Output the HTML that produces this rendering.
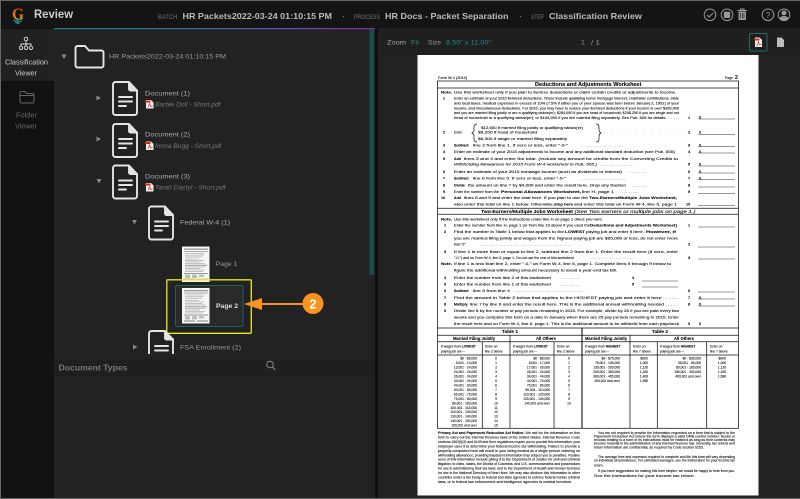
<!DOCTYPE html>
<html><head><meta charset="utf-8"><title>Review</title>
<style>
html,body{margin:0;padding:0;background:#222;width:800px;height:499px;overflow:hidden}
svg{display:block;font-family:"Liberation Sans",sans-serif}
.ui{filter:blur(.3px)}
.doc{filter:blur(.35px)}
.doc text{font-size:3.8px;fill:#000;stroke:#000;stroke-width:.07}
.doc .b{font-weight:bold;fill:#000}
.doc .h{font-size:5px;font-weight:bold;fill:#000}
.doc .s{font-size:3.3px}
.doc .e{text-anchor:end;font-size:3.3px}
.doc .m{text-anchor:middle;font-size:3.3px}
.doc .c{text-anchor:middle;font-size:4.2px;font-weight:bold;fill:#000}
.doc .t{font-size:3.3px}
</style></head><body>
<svg width="800" height="499" viewBox="0 0 800 499" xmlns="http://www.w3.org/2000/svg">
<defs>
<linearGradient id="gl" x1="0" x2="1" y1="0" y2="0"><stop offset="0" stop-color="#178089"/><stop offset=".5" stop-color="#3a6aa8"/><stop offset="1" stop-color="#8f2ca8"/></linearGradient>
<linearGradient id="lg" x1="0" x2="0" y1="0" y2="1"><stop offset="0" stop-color="#d9381c"/><stop offset=".75" stop-color="#e88a1e"/></linearGradient>
<pattern id="dots" width="2" height="2" patternUnits="userSpaceOnUse"><rect width="2" height="2" fill="#1e1e1e"/><rect width="1" height="1" fill="#232323"/></pattern>
<g id="docicon" fill="none" stroke="#e4e4e4" stroke-width="1.9" stroke-linejoin="round" stroke-linecap="round">
<path d="M3.5 1H17L25 9.500V31.500a2.500 2.500 0 0 1-2.500 2.500H3.500A2.500 2.500 0 0 1 1 31.500V3.500A2.500 2.500 0 0 1 3.500 1Z"/>
<path d="M17 1.500V8a1.500 1.500 0 0 0 1.500 1.500H25" fill="#e4e4e4"/>
<path d="M7 16H20M7 20.500H20M7 25H14"/>
</g>
<g id="pdf"><path d="M1 0H6L8.500 2.500V8.500H1Z" fill="#eee"/><rect x="0" y="0.500" width="5.500" height="2" fill="#d5281b"/><path d="M3 7L4.800 3.500L5.500 6.500L7.500 6" fill="none" stroke="#d5281b" stroke-width=".7"/></g>
<g id="thumb">
<rect width="27.500" height="35.500" fill="#f6f6f6"/>
<g fill="#bdbdbd">
<rect x="2" y="2" width="24" height="1.300" fill="#999"/><rect x="2" y="4.500" width="24" height="1" fill="#aaa"/><rect x="3" y="6.500" width="19" height=".9"/><rect x="3" y="8.200" width="19" height=".9"/><rect x="3" y="9.900" width="17" height=".9"/><rect x="3" y="12" width="14" height=".9"/><rect x="3" y="13.500" width="19" height=".9"/><rect x="3" y="15" width="17" height=".9"/><rect x="3" y="16.500" width="20" height=".9"/><rect x="3" y="18.300" width="22" height="1" fill="#999"/><rect x="3" y="20" width="20" height=".9"/><rect x="3" y="21.500" width="15" height=".9"/><rect x="3" y="23" width="20" height=".9"/><rect x="3" y="24.500" width="18" height=".9"/>
<rect x="2" y="26.500" width="24" height="1" fill="#999"/><rect x="3" y="28" width="5" height="3.500"/><rect x="10" y="28" width="5" height="3.500"/><rect x="17" y="28" width="5" height="2.500"/><rect x="2" y="32" width="11" height="2"/><rect x="15" y="32" width="11" height="2"/>
</g></g>
</defs>

<rect width="800" height="499" fill="#222"/>
<g class="ui">
<!-- header -->
<rect width="800" height="28" fill="#141414"/>
<rect x="0" y="0" width="800" height="1" fill="#666"/>
<rect x="0" y="0" width="1" height="499" fill="#666"/>
<rect x="0" y="498" width="800" height="1" fill="#666"/>
<!-- sidebar -->
<rect x="1" y="28" width="53" height="470" fill="#111"/>
<rect x="1" y="29" width="53" height="52" fill="#212121"/>
<!-- tree panel -->
<rect x="54" y="29" width="321" height="469" fill="#222"/>
<rect x="54" y="28" width="321" height="1.200" fill="url(#gl)"/>
<rect x="369.500" y="29" width="4.500" height="246" fill="#1b4c4d"/>
<rect x="375" y="28" width="3" height="470" fill="#0f0f0f"/>
<!-- right panel -->
<rect x="378" y="28" width="422" height="470" fill="#222"/>
<rect x="378" y="29" width="422" height="26" fill="url(#dots)"/>
<!-- doc types -->
<rect x="54" y="358" width="321" height="19" fill="url(#dots)"/>
<rect x="279" y="362" width="91" height="11" fill="#1d1d1d"/>
<circle cx="270" cy="364.500" r="3.300" fill="none" stroke="#888" stroke-width="1"/><path d="M272.500 367L275.500 370" stroke="#888" stroke-width="1.100"/>
<text x="58.500" y="370.500" font-size="8" font-weight="bold" fill="#777" textLength="69" lengthAdjust="spacingAndGlyphs">Document Types</text>

<!-- logo -->
<text x="12" y="19.500" font-family="Liberation Serif" font-size="17" font-weight="bold" fill="url(#lg)" textLength="12" lengthAdjust="spacingAndGlyphs">G</text>
<path d="M13.500 20q2.300 1.300 4.500 0t4.500 0M14.500 21.800q1.800 1 3.500 0t3.500 0" fill="none" stroke="#1f9a9a" stroke-width="1.100"/>
<path d="M15.500 22.500h5l-2.500 1.700z" fill="#1f9a9a"/>
<text x="34" y="18" font-size="11.500" font-weight="bold" fill="#ccc" textLength="39" lengthAdjust="spacingAndGlyphs">Review</text>
<text x="158" y="19" font-size="6.500" fill="#777" textLength="19" lengthAdjust="spacingAndGlyphs">BATCH</text>
<text x="182.500" y="19" font-size="8.500" font-weight="bold" fill="#bbb" textLength="149.500" lengthAdjust="spacingAndGlyphs">HR Packets2022-03-24 01:10:15 PM</text>
<circle cx="343.500" cy="16.500" r=".7" fill="#777"/>
<text x="354" y="19" font-size="6.500" fill="#777" textLength="26" lengthAdjust="spacingAndGlyphs">PROCESS</text>
<text x="385" y="19" font-size="8.500" font-weight="bold" fill="#bbb" textLength="123.500" lengthAdjust="spacingAndGlyphs">HR Docs - Packet Separation</text>
<circle cx="520.500" cy="16.500" r=".7" fill="#777"/>
<text x="531" y="19" font-size="6.500" fill="#777" textLength="13" lengthAdjust="spacingAndGlyphs">STEP</text>
<text x="549" y="19" font-size="8.500" font-weight="bold" fill="#bbb" textLength="93" lengthAdjust="spacingAndGlyphs">Classification Review</text>
<!-- header icons -->
<g fill="none" stroke="#999" stroke-width="1">
<circle cx="710" cy="14.800" r="5.800"/><path d="M707 14.800l2.200 2.200 4-4.200"/>
<circle cx="727" cy="14.800" r="5.800"/><rect x="724.300" y="12.100" width="5.400" height="5.400" fill="#999" rx="1"/>
<path d="M737.500 10.500h9.500M740.500 10.500V9h3.500v1.500" stroke-width="1.100"/><path d="M738.500 11.500h7.500v8.500h-7.500z" fill="#999" stroke="none"/><path d="M740.500 13v5.500M742.300 13v5.500M744 13v5.500" stroke="#141414" stroke-width=".6"/>
<circle cx="768" cy="14.800" r="5.800"/>
<circle cx="784" cy="14.800" r="5.800"/>
</g>
<text x="768" y="17.800" font-size="8" fill="#999" text-anchor="middle">?</text>
<circle cx="784" cy="13" r="2.500" fill="#999"/><path d="M779.500 18.500a4.800 3.800 0 0 1 9 0a5.800 5.800 0 0 1-9 0z" fill="#999"/>

<!-- sidebar icons -->
<g fill="none" stroke="#ddd" stroke-width=".9">
<circle cx="26" cy="39" r="1.800"/><path d="M26 41v3M21 46.500v-2.500h10v2.500M26 44v2.500"/>
<circle cx="21" cy="47.800" r="1.700"/><circle cx="26" cy="47.800" r="1.700"/><circle cx="31" cy="47.800" r="1.700"/>
</g>
<text x="5" y="64.500" font-size="7" fill="#ccc" textLength="43" lengthAdjust="spacingAndGlyphs">Classification</text>
<text x="15" y="75.500" font-size="7" fill="#ccc" textLength="22" lengthAdjust="spacingAndGlyphs">Viewer</text>
<path d="M20 93a1.500 1.500 0 0 1 1.500-1.500h3.500l1.500 2h6a1.500 1.500 0 0 1 1.500 1.500v6.500a1.500 1.500 0 0 1-1.500 1.500H21.500a1.500 1.500 0 0 1-1.500-1.500zM20 95.500h14" fill="none" stroke="#666" stroke-width="1"/>
<text x="16" y="117.500" font-size="7" fill="#666" textLength="21" lengthAdjust="spacingAndGlyphs">Folder</text>
<text x="15" y="128.500" font-size="7" fill="#666" textLength="22" lengthAdjust="spacingAndGlyphs">Viewer</text>

<!-- tree -->
<path d="M61.500 54.500h5l-2.500 4.500z" fill="#888"/>
<path d="M77.500 46h7.500l4 4.500h12.500a2 2 0 0 1 2 2V65.500a2 2 0 0 1-2 2H77.500a2 2 0 0 1-2-2V48a2 2 0 0 1 2-2Z" fill="none" stroke="#e4e4e4" stroke-width="1.900" stroke-linejoin="round"/>
<text x="109" y="58.500" font-size="6.800" fill="#999" textLength="117" lengthAdjust="spacingAndGlyphs">HR Packets2022-03-24 01:10:15 PM</text>

<path d="M96.500 95.500l4.500 2.500-4.500 2.500z" fill="#888"/>
<use href="#docicon" x="112" y="81"/>
<text x="145" y="95.500" font-size="6.800" fill="#aaa" textLength="45" lengthAdjust="spacingAndGlyphs">Document (1)</text>
<use href="#pdf" x="145" y="100"/>
<text x="155" y="106.500" font-size="6.300" font-style="italic" fill="#777" textLength="65.500" lengthAdjust="spacingAndGlyphs">Barbie Doll - Short.pdf</text>

<path d="M96.500 136.500l4.500 2.500-4.500 2.500z" fill="#888"/>
<use href="#docicon" x="112" y="123"/>
<text x="145" y="136.500" font-size="6.800" fill="#aaa" textLength="45" lengthAdjust="spacingAndGlyphs">Document (2)</text>
<use href="#pdf" x="145" y="141.500"/>
<text x="155" y="148" font-size="6.300" font-style="italic" fill="#777" textLength="66.500" lengthAdjust="spacingAndGlyphs">Imma Bugg - Short.pdf</text>

<path d="M96.500 179h5l-2.500 4.500z" fill="#888"/>
<use href="#docicon" x="112" y="164.500"/>
<text x="145" y="178.500" font-size="6.800" fill="#aaa" textLength="45" lengthAdjust="spacingAndGlyphs">Document (3)</text>
<use href="#pdf" x="145" y="183"/>
<text x="155" y="189.500" font-size="6.300" font-style="italic" fill="#777" textLength="70.500" lengthAdjust="spacingAndGlyphs">Tarah Dactyl - Short.pdf</text>

<path d="M132 220h5l-2.500 4.500z" fill="#888"/>
<use href="#docicon" x="148" y="205.500"/>
<text x="180" y="224.500" font-size="6.800" fill="#aaa" textLength="50" lengthAdjust="spacingAndGlyphs">Federal W-4 (1)</text>

<use href="#thumb" x="182" y="246.500"/>
<text x="215.700" y="266" font-size="6.800" fill="#999" textLength="21.500" lengthAdjust="spacingAndGlyphs">Page 1</text>

<rect x="175.500" y="285.500" width="67.500" height="41" rx="2" fill="#2a2a2a" stroke="#1a6468" stroke-width="1"/>
<use href="#thumb" x="182" y="288"/>
<text x="216" y="308" font-size="6.800" font-weight="bold" fill="#ddd" textLength="22" lengthAdjust="spacingAndGlyphs">Page 2</text>
<rect x="166.800" y="279.800" width="84.500" height="53.500" rx="1" fill="none" stroke="#e8e80c" stroke-width="1.300"/>

<!-- FSA -->
<path d="M133 344.500l4.500 2.500-4.500 2.500z" fill="#888"/>
<svg x="148" y="330" width="26" height="24" overflow="hidden"><use href="#docicon" x="0" y="0"/></svg>
<text x="180" y="349.500" font-size="6.800" fill="#999" textLength="61" lengthAdjust="spacingAndGlyphs">FSA Enrollment (2)</text>

<!-- callout -->
<path d="M258 304H304" stroke="#f7931e" stroke-width="2"/>
<path d="M244 304L262 298V310Z" fill="#f7931e"/>
<circle cx="313" cy="303.500" r="10.500" fill="#f7931e"/>
<text x="313" y="308.500" font-size="13" font-weight="bold" fill="#fff" text-anchor="middle">2</text>

<!-- toolbar -->
<text x="387" y="44.500" font-size="6.800" fill="#aaa" textLength="19" lengthAdjust="spacingAndGlyphs">Zoom</text>
<text x="411" y="44.500" font-size="6.800" fill="#1b8f97" textLength="8" lengthAdjust="spacingAndGlyphs">Fit</text>
<text x="428" y="44.500" font-size="6.800" fill="#999" textLength="13" lengthAdjust="spacingAndGlyphs">Size</text>
<text x="446" y="44.500" font-size="6.800" fill="#1b8f97" textLength="45" lengthAdjust="spacingAndGlyphs">8.50" x 11.00"</text>
<text x="581" y="44.500" font-size="6.800" fill="#999">1</text>
<text x="591" y="44.500" font-size="6.800" fill="#999" textLength="9" lengthAdjust="spacingAndGlyphs">/ 1</text>
<rect x="749.500" y="33.500" width="17.500" height="17.500" rx="1.500" fill="none" stroke="#1a6c72" stroke-width="1"/>
<path d="M755 37.500h4.500l2.500 2.500v7h-7z" fill="#eee"/><rect x="754" y="38.500" width="5.500" height="2" fill="#d5281b"/><path d="M757 46l1.500-4 1 3 2-.5" fill="none" stroke="#d5281b" stroke-width=".7"/>
<path d="M777 37.500h4.500l2.500 2.500v7h-7z" fill="#bbb"/>
</g>

<!-- document page -->
<rect x="417.500" y="55" width="341" height="440.500" fill="#fff"/>
<g class="doc">
<text class="s" x="438" y="79" textLength="29" lengthAdjust="spacingAndGlyphs">Form W-4 (2015)</text>
<text class="s" x="725" y="79" textLength="8" lengthAdjust="spacingAndGlyphs">Page</text><text class="b" x="735" y="79" style="font-size:5px">2</text>
<g fill="none" stroke="#111" stroke-width=".75">
<rect x="437.500" y="81" width="301" height="347.300"/>
<path d="M437.500 88H738.500M437.500 208.300H738.500M437.500 214.300H738.500M437.500 328H738.500M437.500 335.300H738.500M437.500 341.700H738.500M437.500 355H738.500"/>
<path d="M510 335.300V428.300M482.300 341.700V428.300M554 341.700V428.300M630 335.300V428.300M657.300 341.700V428.300M706.700 341.700V428.300"/>
<path d="M582 328V428.300" stroke-width="1.100"/>
</g>
<g stroke="#333" stroke-width=".55">
<path d="M698 119H735M698 134.500H735M698 146.500H735M698 153H735M698 166H735M698 173H735M698 179.500H735M698 187H735M698 193.500H735M698 205.500H735"/>
<path d="M698 227H735M698 247H735M698 259H735M642 281H678M642 287H678M698 292H735M698 299H735M698 306H735"/>
</g>
<text class="h" x="535" y="86" textLength="106.500" lengthAdjust="spacingAndGlyphs">Deductions and Adjustments Worksheet</text>
<text class="b" x="441" y="93.500" textLength="11" lengthAdjust="spacingAndGlyphs">Note.</text>
<text x="454" y="93.500" textLength="222.500" lengthAdjust="spacingAndGlyphs">Use this worksheet only if you plan to itemize deductions or claim certain credits or adjustments to income.</text>
<text class="b" x="443" y="99.500">1</text>
<text class="t" x="454" y="99.500" textLength="225" lengthAdjust="spacingAndGlyphs">Enter an estimate of your 2015 itemized deductions. These include qualifying home mortgage interest, charitable contributions, state</text>
<text class="t" x="454" y="104.500" textLength="225" lengthAdjust="spacingAndGlyphs">and local taxes, medical expenses in excess of 10% (7.5% if either you or your spouse was born before January 2, 1951) of your</text>
<text class="t" x="454" y="109.300" textLength="225" lengthAdjust="spacingAndGlyphs">income, and miscellaneous deductions. For 2015, you may have to reduce your itemized deductions if your income is over $309,900</text>
<text class="t" x="454" y="114.200" textLength="225" lengthAdjust="spacingAndGlyphs">and you are married filing jointly or are a qualifying widow(er); $284,050 if you are head of household; $258,250 if you are single and not</text>
<text class="t" x="454" y="118.900" textLength="225" lengthAdjust="spacingAndGlyphs">head of household or a qualifying widow(er); or $154,950 if you are married filing separately. See Pub. 505 for details . . . . . .</text>
<text class="b" x="688" y="118.900">1</text><text x="699" y="118.500">$</text>
<text class="b" x="443" y="133.500">2</text><text class="t" x="454" y="133.500">Enter:</text>
<path d="M477 124q-3 0-3 3v3q0 2-2 3 2 1 2 3v3q0 3 3 3M596 124q3 0 3 3v3q0 2 2 3-2 1-2 3v3q0 3-3 3" fill="none" stroke="#111" stroke-width=".7"/>
<text class="t" x="481" y="129" textLength="102" lengthAdjust="spacingAndGlyphs">$12,600 if married filing jointly or qualifying widow(er)</text>
<text class="t" x="478" y="133.500" textLength="59" lengthAdjust="spacingAndGlyphs">$9,250 if head of household</text>
<text class="t" x="478" y="140" textLength="89" lengthAdjust="spacingAndGlyphs">$6,300 if single or married filing separately</text>
<text class="s" x="604" y="133.500" letter-spacing="3">. . . . . . . . . . . .</text>
<text class="b" x="688" y="133.500">2</text><text x="699" y="133.500">$</text>
<text class="b" x="443" y="146.300">3</text><text class="b" x="454" y="146.300" style="font-size:3.600px">Subtract</text><text class="t" x="473" y="146.300" textLength="95" lengthAdjust="spacingAndGlyphs">line 2 from line 1. If zero or less, enter "-0-"</text>
<text class="s" x="580" y="146.300">. . . . . . . . . . . . . . . . . . . . . . . . .</text>
<text class="b" x="688" y="146.300">3</text><text x="699" y="146.300">$</text>
<text class="b" x="443" y="153">4</text><text class="t" x="454" y="153" textLength="221" lengthAdjust="spacingAndGlyphs">Enter an estimate of your 2015 adjustments to income and any additional standard deduction (see Pub. 505)</text>
<text class="b" x="688" y="153">4</text><text x="699" y="153">$</text>
<text class="b" x="443" y="160">5</text><text class="b" x="454" y="160" style="font-size:3.600px">Add</text>
<text x="464" y="160" textLength="214" lengthAdjust="spacingAndGlyphs">lines 3 and 4 and enter the total. (Include any amount for credits from the Converting Credits to</text>
<text x="454" y="165.600" font-style="italic" textLength="143" lengthAdjust="spacingAndGlyphs">Withholding Allowances for 2015 Form W-4 worksheet in Pub. 505.)</text>
<text class="s" x="600" y="165.600">. . . . . . . . . . . . . . . . . . .</text>
<text class="b" x="688" y="165.600">5</text><text x="699" y="165.600">$</text>
<text class="b" x="443" y="173">6</text><text class="t" x="454" y="173" textLength="168" lengthAdjust="spacingAndGlyphs">Enter an estimate of your 2015 nonwage income (such as dividends or interest)</text>
<text class="s" x="628" y="173">. . . . . . . . . .</text>
<text class="b" x="688" y="173">6</text><text x="699" y="173">$</text>
<text class="b" x="443" y="179.300">7</text><text class="b" x="454" y="179.300" style="font-size:3.600px">Subtract</text><text class="t" x="473" y="179.300" textLength="93" lengthAdjust="spacingAndGlyphs">line 6 from line 5. If zero or less, enter "-0-"</text>
<text class="s" x="580" y="179.300">. . . . . . . . . . . . . . . . . . . . . . . . .</text>
<text class="b" x="688" y="179.300">7</text><text x="699" y="179.300">$</text>
<text class="b" x="443" y="186.600">8</text><text class="b" x="454" y="186.600" style="font-size:3.600px">Divide</text><text class="t" x="468" y="186.600" textLength="158" lengthAdjust="spacingAndGlyphs">the amount on line 7 by $4,000 and enter the result here. Drop any fraction</text>
<text class="s" x="632" y="186.600">. . . . . . . . .</text><text class="b" x="688" y="186.600">8</text>
<text class="b" x="443" y="193">9</text><text class="t" x="454" y="193" textLength="45" lengthAdjust="spacingAndGlyphs">Enter the number from the</text><text class="b" x="501" y="193" textLength="80" lengthAdjust="spacingAndGlyphs">Personal Allowances Worksheet,</text><text class="t" x="582" y="193" textLength="32" lengthAdjust="spacingAndGlyphs">line H, page 1</text>
<text class="s" x="620" y="193">. . . . . . . . . . .</text><text class="b" x="688" y="193">9</text>
<text class="b" x="441" y="199">10</text><text class="b" x="454" y="199" style="font-size:3.600px">Add</text><text class="t" x="464" y="199" textLength="124" lengthAdjust="spacingAndGlyphs">lines 8 and 9 and enter the total here. If you plan to use the</text><text class="b" x="589" y="199" textLength="88" lengthAdjust="spacingAndGlyphs">Two-Earners/Multiple Jobs Worksheet,</text>
<text class="t" x="454" y="205.500" textLength="100" lengthAdjust="spacingAndGlyphs">also enter this total on line 1 below. Otherwise,</text><text class="b" x="554" y="205.500" textLength="19" lengthAdjust="spacingAndGlyphs">stop here</text><text class="t" x="574" y="205.500" textLength="103" lengthAdjust="spacingAndGlyphs">and enter this total on Form W-4, line 5, page 1</text>
<text class="b" x="686" y="205.500">10</text>

<text class="h" x="481" y="213" textLength="92" lengthAdjust="spacingAndGlyphs" style="font-size:4.600px">Two-Earners/Multiple Jobs Worksheet</text>
<text x="574.500" y="213" font-style="italic" style="font-size:4.500px" textLength="121" lengthAdjust="spacingAndGlyphs">(See Two earners or multiple jobs on page 1.)</text>
<text class="b" x="441" y="220.300" textLength="11" lengthAdjust="spacingAndGlyphs">Note.</text><text class="t" x="454" y="220.300" textLength="149" lengthAdjust="spacingAndGlyphs">Use this worksheet only if the instructions under line H on page 1 direct you here.</text>
<text class="b" x="444" y="226.600">1</text><text class="t" x="454" y="226.600" textLength="136" lengthAdjust="spacingAndGlyphs">Enter the number from line H, page 1 (or from line 10 above if you used the</text><text class="b" x="590" y="226.600" textLength="87" lengthAdjust="spacingAndGlyphs">Deductions and Adjustments Worksheet)</text><text class="b" x="688" y="226.600">1</text>
<text class="b" x="444" y="233">2</text><text class="t" x="454" y="233" textLength="110" lengthAdjust="spacingAndGlyphs">Find the number in Table 1 below that applies to the</text><text class="b" x="565" y="233" textLength="20" lengthAdjust="spacingAndGlyphs">LOWEST</text><text class="t" x="586" y="233" textLength="58" lengthAdjust="spacingAndGlyphs">paying job and enter it here.</text><text class="b" x="646" y="233" textLength="30" lengthAdjust="spacingAndGlyphs">However, if</text>
<text class="t" x="454" y="239.600" textLength="224" lengthAdjust="spacingAndGlyphs">you are married filing jointly and wages from the highest paying job are $65,000 or less, do not enter more</text>
<text class="t" x="454" y="245.600">than "3"</text><text class="s" x="480" y="245.600">. . . . . . . . . . . . . . . . . . . . . . . . . . . . . . . . . . . . . . . . . . . . . . . . . .</text><text class="b" x="688" y="245.600">2</text>
<text class="b" x="444" y="253">3</text><text class="t" x="454" y="253" textLength="224" lengthAdjust="spacingAndGlyphs">If line 1 is more than or equal to line 2, subtract line 2 from line 1. Enter the result here (if zero, enter</text>
<text class="t" x="454" y="259" textLength="120" lengthAdjust="spacingAndGlyphs">"-0-") and on Form W-4, line 5, page 1. Do not use the rest of this worksheet</text><text class="s" x="590" y="259">. . . . . . . . . . . . . . . . . . . . . . .</text><text class="b" x="688" y="259">3</text>
<text class="b" x="441" y="265" textLength="11" lengthAdjust="spacingAndGlyphs">Note.</text><text class="t" x="454" y="265" textLength="217" lengthAdjust="spacingAndGlyphs">If line 1 is less than line 2, enter "-0-" on Form W-4, line 5, page 1. Complete lines 4 through 9 below to</text>
<text class="t" x="454" y="271.300" textLength="163" lengthAdjust="spacingAndGlyphs">figure the additional withholding amount necessary to avoid a year-end tax bill.</text>
<text class="b" x="444" y="279">4</text><text class="t" x="454" y="279" textLength="97" lengthAdjust="spacingAndGlyphs">Enter the number from line 2 of this worksheet</text><text class="s" x="560" y="279">. . . . . . . . . . .</text><text class="b" x="632" y="279">4</text>
<text class="b" x="444" y="285.600">5</text><text class="t" x="454" y="285.600" textLength="97" lengthAdjust="spacingAndGlyphs">Enter the number from line 1 of this worksheet</text><text class="s" x="560" y="285.600">. . . . . . . . . . .</text><text class="b" x="632" y="285.600">5</text>
<text class="b" x="444" y="292">6</text><text class="b" x="454" y="292" style="font-size:3.600px">Subtract</text><text class="t" x="473" y="292" textLength="37" lengthAdjust="spacingAndGlyphs">line 5 from line 4</text><text class="s" x="514" y="292">. . . . . . . . . . . . . . . . . . . . . . . . . . . . . . . . . . . . . . .</text><text class="b" x="688" y="292">6</text>
<text class="b" x="444" y="299">7</text><text class="t" x="454" y="299" textLength="225" lengthAdjust="spacingAndGlyphs">Find the amount in Table 2 below that applies to the HIGHEST paying job and enter it here . . . . . .</text><text class="b" x="688" y="299">7</text><text x="699" y="299">$</text>
<text class="b" x="444" y="305.600">8</text><text class="b" x="454" y="305.600" style="font-size:3.600px">Multiply</text><text class="t" x="470" y="305.600" textLength="205" lengthAdjust="spacingAndGlyphs">line 7 by line 6 and enter the result here. This is the additional annual withholding needed . . . .</text><text class="b" x="688" y="305.600">8</text><text x="699" y="305.600">$</text>
<text class="b" x="444" y="312">9</text><text class="t" x="454" y="312" textLength="225" lengthAdjust="spacingAndGlyphs">Divide line 8 by the number of pay periods remaining in 2015. For example, divide by 25 if you are paid every two</text>
<text class="t" x="454" y="318.600" textLength="225" lengthAdjust="spacingAndGlyphs">weeks and you complete this form on a date in January when there are 25 pay periods remaining in 2015. Enter</text>
<text class="t" x="454" y="325" textLength="225" lengthAdjust="spacingAndGlyphs">the result here and on Form W-4, line 6, page 1. This is the additional amount to be withheld from each paycheck</text><text class="b" x="688" y="325">9</text><text x="699" y="325">$</text>

<text class="c" x="510" y="333" style="font-size:4.800px">Table 1</text>
<text class="c" x="660" y="333" style="font-size:4.800px">Table 2</text>
<text class="c" x="474" y="340">Married Filing Jointly</text><text class="c" x="546" y="340">All Others</text><text class="c" x="606" y="340">Married Filing Jointly</text><text class="c" x="684" y="340">All Others</text>
<text class="s" x="441" y="347.500">If wages from <tspan font-weight="bold">LOWEST</tspan></text><text class="s" x="441" y="352.500">paying job are—</text>
<text class="s" x="485" y="347.500">Enter on</text><text class="s" x="485" y="352.500">line 2 above</text>
<text class="s" x="513" y="347.500">If wages from <tspan font-weight="bold">LOWEST</tspan></text><text class="s" x="513" y="352.500">paying job are—</text>
<text class="s" x="557" y="347.500">Enter on</text><text class="s" x="557" y="352.500">line 2 above</text>
<text class="s" x="585" y="347.500">If wages from <tspan font-weight="bold">HIGHEST</tspan></text><text class="s" x="585" y="352.500">paying job are—</text>
<text class="s" x="633" y="347.500">Enter on</text><text class="s" x="633" y="352.500">line 7 above</text>
<text class="s" x="660" y="347.500">If wages from <tspan font-weight="bold">HIGHEST</tspan></text><text class="s" x="660" y="352.500">paying job are—</text>
<text class="s" x="710" y="347.500">Enter on</text><text class="s" x="710" y="352.500">line 7 above</text>

<text class="e" x="477" y="359.600">$0 - $8,000</text><text class="m" x="496" y="359.600">0</text>
<text class="e" x="477" y="364.100">8,001 - 13,000</text><text class="m" x="496" y="364.100">1</text>
<text class="e" x="477" y="368.500">13,001 - 24,000</text><text class="m" x="496" y="368.500">2</text>
<text class="e" x="477" y="373">24,001 - 26,000</text><text class="m" x="496" y="373">3</text>
<text class="e" x="477" y="377.500">26,001 - 34,000</text><text class="m" x="496" y="377.500">4</text>
<text class="e" x="477" y="381.900">34,001 - 44,000</text><text class="m" x="496" y="381.900">5</text>
<text class="e" x="477" y="386.400">44,001 - 50,000</text><text class="m" x="496" y="386.400">6</text>
<text class="e" x="477" y="390.900">50,001 - 65,000</text><text class="m" x="496" y="390.900">7</text>
<text class="e" x="477" y="395.400">65,001 - 75,000</text><text class="m" x="496" y="395.400">8</text>
<text class="e" x="477" y="399.800">75,001 - 80,000</text><text class="m" x="496" y="399.800">9</text>
<text class="e" x="477" y="404.300">80,001 - 100,000</text><text class="m" x="496" y="404.300">10</text>
<text class="e" x="477" y="408.800">100,001 - 115,000</text><text class="m" x="496" y="408.800">11</text>
<text class="e" x="477" y="413.200">115,001 - 130,000</text><text class="m" x="496" y="413.200">12</text>
<text class="e" x="477" y="417.700">130,001 - 140,000</text><text class="m" x="496" y="417.700">13</text>
<text class="e" x="477" y="422.200">140,001 - 150,000</text><text class="m" x="496" y="422.200">14</text>
<text class="e" x="477" y="426.600">150,001 and over</text><text class="m" x="496" y="426.600">15</text>

<text class="e" x="550" y="359.600">$0 - $8,000</text><text class="m" x="569" y="359.600">0</text>
<text class="e" x="550" y="364.100">8,001 - 17,000</text><text class="m" x="569" y="364.100">1</text>
<text class="e" x="550" y="368.500">17,001 - 26,000</text><text class="m" x="569" y="368.500">2</text>
<text class="e" x="550" y="373">26,001 - 34,000</text><text class="m" x="569" y="373">3</text>
<text class="e" x="550" y="377.500">34,001 - 44,000</text><text class="m" x="569" y="377.500">4</text>
<text class="e" x="550" y="381.900">44,001 - 75,000</text><text class="m" x="569" y="381.900">5</text>
<text class="e" x="550" y="386.400">75,001 - 85,000</text><text class="m" x="569" y="386.400">6</text>
<text class="e" x="550" y="390.900">85,001 - 110,000</text><text class="m" x="569" y="390.900">7</text>
<text class="e" x="550" y="395.400">110,001 - 125,000</text><text class="m" x="569" y="395.400">8</text>
<text class="e" x="550" y="399.800">125,001 - 140,000</text><text class="m" x="569" y="399.800">9</text>
<text class="e" x="550" y="404.300">140,001 and over</text><text class="m" x="569" y="404.300">10</text>

<text class="e" x="620" y="359.600">$0 - $75,000</text><text class="m" x="644" y="359.600">$600</text>
<text class="e" x="620" y="364.100">75,001 - 135,000</text><text class="m" x="644" y="364.100">1,000</text>
<text class="e" x="620" y="368.500">135,001 - 205,000</text><text class="m" x="644" y="368.500">1,120</text>
<text class="e" x="620" y="373">205,001 - 360,000</text><text class="m" x="644" y="373">1,320</text>
<text class="e" x="620" y="377.500">360,001 - 405,000</text><text class="m" x="644" y="377.500">1,400</text>
<text class="e" x="620" y="381.900">405,001 and over</text><text class="m" x="644" y="381.900">1,580</text>

<text class="e" x="701" y="359.600">$0 - $38,000</text><text class="m" x="722" y="359.600">$600</text>
<text class="e" x="701" y="364.100">38,001 - 85,000</text><text class="m" x="722" y="364.100">1,000</text>
<text class="e" x="701" y="368.500">85,001 - 185,000</text><text class="m" x="722" y="368.500">1,120</text>
<text class="e" x="701" y="373">185,001 - 400,000</text><text class="m" x="722" y="373">1,320</text>
<text class="e" x="701" y="377.500">400,001 and over</text><text class="m" x="722" y="377.500">1,580</text>

<text class="t" x="438" y="434" textLength="142" lengthAdjust="spacingAndGlyphs"><tspan font-weight="bold">Privacy Act and Paperwork Reduction Act Notice.</tspan> We ask for the information on this</text>
<text class="t" x="438" y="438.500" textLength="142" lengthAdjust="spacingAndGlyphs">form to carry out the Internal Revenue laws of the United States. Internal Revenue Code</text>
<text class="t" x="438" y="442.900" textLength="142" lengthAdjust="spacingAndGlyphs">sections 3402(f)(2) and 6109 and their regulations require you to provide this information; your</text>
<text class="t" x="438" y="447.400" textLength="142" lengthAdjust="spacingAndGlyphs">employer uses it to determine your federal income tax withholding. Failure to provide a</text>
<text class="t" x="438" y="451.800" textLength="142" lengthAdjust="spacingAndGlyphs">properly completed form will result in your being treated as a single person claiming no</text>
<text class="t" x="438" y="456.300" textLength="142" lengthAdjust="spacingAndGlyphs">withholding allowances; providing fraudulent information may subject you to penalties. Routine</text>
<text class="t" x="438" y="460.700" textLength="142" lengthAdjust="spacingAndGlyphs">uses of this information include giving it to the Department of Justice for civil and criminal</text>
<text class="t" x="438" y="465.200" textLength="142" lengthAdjust="spacingAndGlyphs">litigation; to cities, states, the District of Columbia, and U.S. commonwealths and possessions</text>
<text class="t" x="438" y="469.600" textLength="142" lengthAdjust="spacingAndGlyphs">for use in administering their tax laws; and to the Department of Health and Human Services</text>
<text class="t" x="438" y="474.100" textLength="142" lengthAdjust="spacingAndGlyphs">for use in the National Directory of New Hires. We may also disclose this information to other</text>
<text class="t" x="438" y="478.500" textLength="142" lengthAdjust="spacingAndGlyphs">countries under a tax treaty, to federal and state agencies to enforce federal nontax criminal</text>
<text class="t" x="438" y="483" textLength="134" lengthAdjust="spacingAndGlyphs">laws, or to federal law enforcement and intelligence agencies to combat terrorism.</text>
<text class="t" x="598" y="434" textLength="137" lengthAdjust="spacingAndGlyphs">You are not required to provide the information requested on a form that is subject to the</text>
<text class="t" x="594" y="437.600" textLength="141" lengthAdjust="spacingAndGlyphs">Paperwork Reduction Act unless the form displays a valid OMB control number. Books or</text>
<text class="t" x="594" y="441.200" textLength="141" lengthAdjust="spacingAndGlyphs">records relating to a form or its instructions must be retained as long as their contents may</text>
<text class="t" x="594" y="444.700" textLength="141" lengthAdjust="spacingAndGlyphs">become material in the administration of any Internal Revenue law. Generally, tax returns and</text>
<text class="t" x="594" y="448.300" textLength="110" lengthAdjust="spacingAndGlyphs">return information are confidential, as required by Code section 6103.</text>
<text class="t" x="598" y="458" textLength="137" lengthAdjust="spacingAndGlyphs">The average time and expenses required to complete and file this form will vary depending</text>
<text class="t" x="594" y="461.700" textLength="141" lengthAdjust="spacingAndGlyphs">on individual circumstances. For estimated averages, see the instructions for your income tax</text>
<text class="t" x="594" y="466.300">return.</text>
<text class="t" x="598" y="472" textLength="137" lengthAdjust="spacingAndGlyphs">If you have suggestions for making this form simpler, we would be happy to hear from you.</text>
<text class="t" x="594" y="477" textLength="101" lengthAdjust="spacingAndGlyphs">See the instructions for your income tax return.</text>
</g>
</svg>
</body></html>
